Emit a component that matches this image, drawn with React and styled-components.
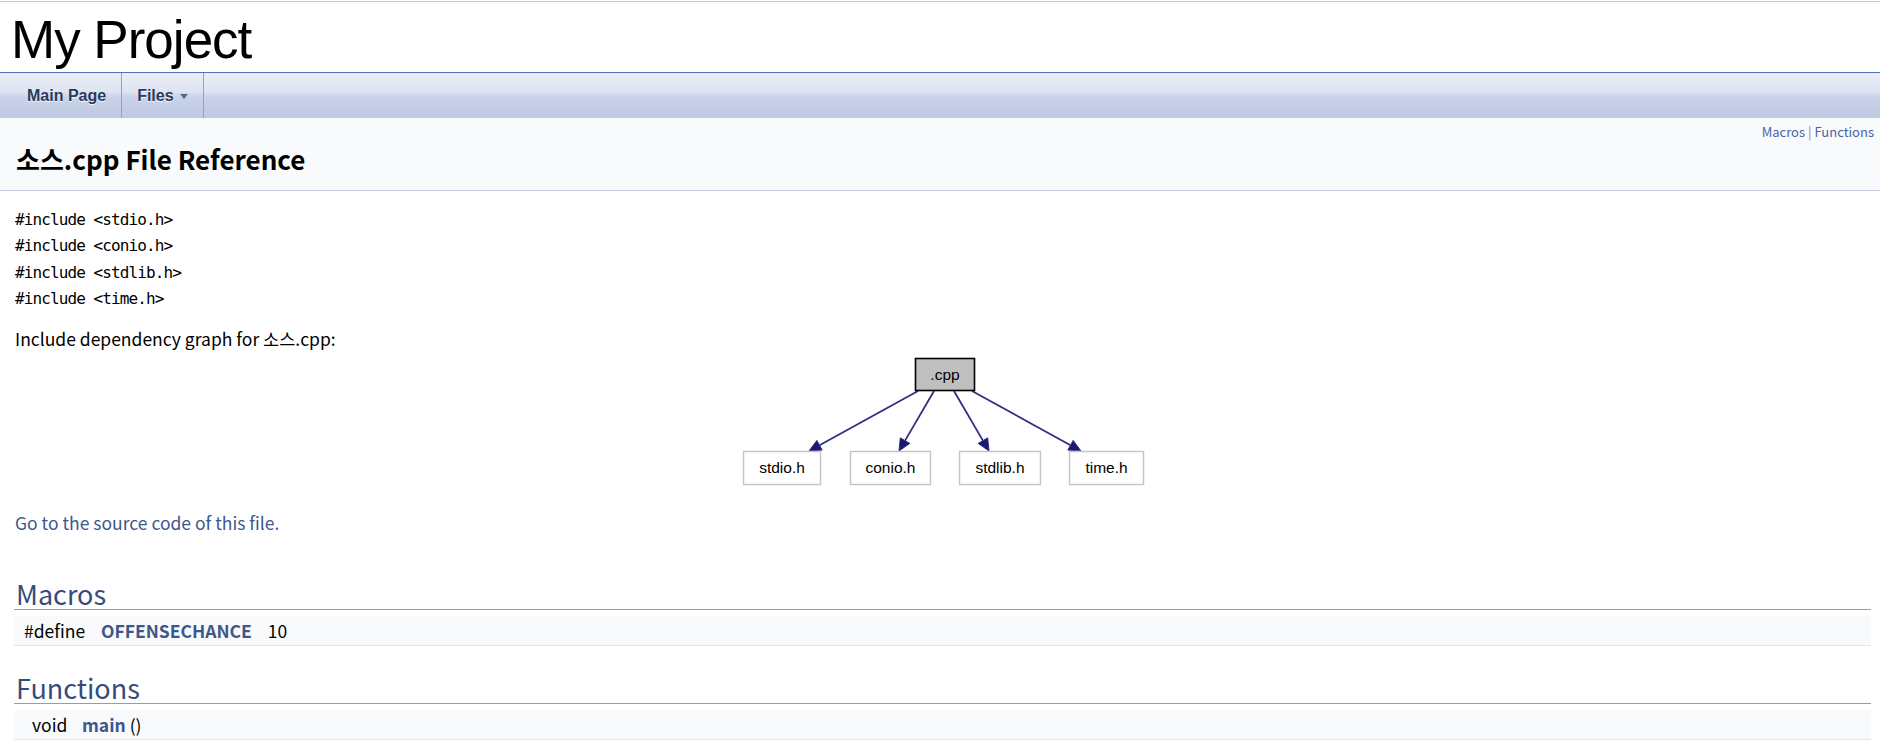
import React from "react";
import styled, { createGlobalStyle } from "styled-components";

const Global = createGlobalStyle`
  html, body { margin: 0; padding: 0; background: #ffffff; }
  body {
    font-family: "Noto Sans CJK KR", "Noto Sans", sans-serif;
    color: #000000;
  }
`;

const Page = styled.div`
  padding-top: 1px;
`;

const TitleArea = styled.div`
  border-top: 1px solid #c8c8c8;
  border-bottom: 1px solid #5373b4;
  height: 70px;
  box-sizing: content-box;
`;

const ProjectName = styled.div`
  font-family: "Liberation Sans", Arial, sans-serif;
  font-size: 53px;
  letter-spacing: -1px;
  line-height: 64px;
  padding: 6px 0 0 11px;
  color: #000;
`;

const NavBar = styled.nav`
  height: 45px;
  display: flex;
  padding-left: 12px;
  background: linear-gradient(
    to bottom,
    #e9edf6 0%,
    #dfe5f1 40%,
    #c8d2e8 55%,
    #bfcae3 100%
  );
`;

const Tab = styled.a`
  display: flex;
  align-items: center;
  gap: 6px;
  padding: 0 15px;
  border-right: 1px solid #8da2cd;
  font-family: "Liberation Sans", Arial, sans-serif;
  font-weight: bold;
  font-size: 16px;
  color: #283a5d;
  text-shadow: 0 1px 1px rgba(255, 255, 255, 0.9);
  text-decoration: none;
`;

const Caret = styled.span`
  width: 0;
  height: 0;
  border-style: solid;
  border-width: 5px 4.5px 0 4.5px;
  border-color: #5a6a8b transparent transparent transparent;
  margin-top: 1px;
`;

const Header = styled.div`
  background: #f9fafc;
  border-bottom: 1px solid #c4cfe5;
  padding: 5px 6px 14px 16px;
`;

const Summary = styled.div`
  text-align: right;
  font-size: 13px;
  line-height: 18px;
  color: #888;
`;

const SummaryLink = styled.a`
  color: #4665a2;
  text-decoration: none;
`;

const PageTitle = styled.div`
  font-weight: bold;
  font-size: 26px;
  line-height: 35px;
  color: #000;
`;

const Contents = styled.div`
  margin: 0 9px 0 14px;
  padding-top: 16px;
`;

const Includes = styled.div`
  font-family: "DejaVu Sans Mono", "Liberation Mono", monospace;
  font-size: 16px;
  letter-spacing: -0.9px;
  line-height: 26.3px;
  padding-left: 1px;
`;

const Para = styled.p`
  margin: ${(p) => p.$mt || 0}px 0 0 1px;
  font-size: 17.5px;
  line-height: 26px;
`;

const Link = styled.a`
  color: #3d578c;
  text-decoration: none;
  font-weight: ${(p) => (p.$bold ? "bold" : "normal")};
`;

const GraphWrap = styled.div`
  display: flex;
  justify-content: center;
`;

const GroupHeader = styled.h2`
  margin: ${(p) => p.$mt}px 0 0 0;
  padding-left: 2px;
  font-size: 27px;
  font-weight: normal;
  line-height: 31px;
  color: #354c7b;
  border-bottom: 1px solid #879ecb;
`;

const MemberRow = styled.div`
  margin-top: 6px;
  height: 29px;
  display: flex;
  align-items: center;
  background: #f9fafc;
  border-bottom: 1px solid #dee4f0;
  font-size: 17.5px;
  line-height: 29px;
`;

const MemLeft = styled.span`
  width: ${(p) => p.$w}px;
  padding-left: ${(p) => p.$pl}px;
  box-sizing: border-box;
  white-space: nowrap;
`;

const MemRight = styled.span`
  white-space: nowrap;
`;

const MacroValue = styled.span`
  margin-left: 16px;
`;

const nodes = [
  { label: ".cpp", x: 182, y: 6, w: 59, h: 32, main: true },
  { label: "stdio.h", x: 10, y: 99, w: 77, h: 33 },
  { label: "conio.h", x: 117, y: 99, w: 80, h: 33 },
  { label: "stdlib.h", x: 226, y: 99, w: 81, h: 33 },
  { label: "time.h", x: 336, y: 99, w: 74, h: 33 },
];

const edges = [
  { s: [185, 39], t: [76, 99] },
  { s: [201, 39], t: [166, 99] },
  { s: [221, 39], t: [256, 99] },
  { s: [239, 39], t: [348, 99] },
];

function Edge({ s, t }) {
  const dx = t[0] - s[0];
  const dy = t[1] - s[1];
  const len = Math.hypot(dx, dy);
  const ux = dx / len;
  const uy = dy / len;
  const L = 12;
  const W = 5.5;
  const bx = t[0] - ux * L;
  const by = t[1] - uy * L;
  const nx = -uy;
  const ny = ux;
  const pts = `${t[0]},${t[1]} ${bx + nx * W},${by + ny * W} ${bx - nx * W},${by - ny * W}`;
  return (
    <g>
      <line x1={s[0]} y1={s[1]} x2={bx} y2={by} stroke="#2e2e85" strokeWidth="1.8" />
      <polygon points={pts} fill="#191970" stroke="#2e2e85" strokeWidth="1" />
    </g>
  );
}

function DependencyGraph() {
  return (
    <svg width="420" height="140" viewBox="0 0 420 140">
      {edges.map((e, i) => (
        <Edge key={i} s={e.s} t={e.t} />
      ))}
      {nodes.map((n) => (
        <g key={n.label}>
          <rect
            x={n.x + 0.5}
            y={n.y + 0.5}
            width={n.w}
            height={n.h}
            fill={n.main ? "#bfbfbf" : "#ffffff"}
            stroke={n.main ? "#000000" : "#c4c4c4"}
            strokeWidth={n.main ? 1.6 : 1.4}
          />
          <text
            x={n.x + n.w / 2 + 0.5}
            y={n.y + n.h / 2 + 5.5}
            textAnchor="middle"
            fontFamily="Liberation Sans, Arial, sans-serif"
            fontSize="15.5"
            fill="#000"
          >
            {n.label}
          </text>
        </g>
      ))}
    </svg>
  );
}

export default function App() {
  return (
    <Page>
      <Global />
      <TitleArea>
        <ProjectName>My Project</ProjectName>
      </TitleArea>
      <NavBar>
        <Tab href="#">Main Page</Tab>
        <Tab href="#">
          Files <Caret />
        </Tab>
      </NavBar>
      <Header>
        <Summary>
          <SummaryLink href="#">Macros</SummaryLink> |{" "}
          <SummaryLink href="#">Functions</SummaryLink>
        </Summary>
        <PageTitle>소스.cpp File Reference</PageTitle>
      </Header>
      <Contents>
        <Includes>
          <div>#include &lt;stdio.h&gt;</div>
          <div>#include &lt;conio.h&gt;</div>
          <div>#include &lt;stdlib.h&gt;</div>
          <div>#include &lt;time.h&gt;</div>
        </Includes>
        <Para $mt={14}>Include dependency graph for 소스.cpp:</Para>
        <GraphWrap>
          <DependencyGraph />
        </GraphWrap>
        <Para $mt={18}>
          <Link href="#">Go to the source code of this file.</Link>
        </Para>
        <GroupHeader $mt={42}>Macros</GroupHeader>
        <MemberRow>
          <MemLeft $w={87} $pl={10}>#define</MemLeft>
          <MemRight>
            <Link href="#" $bold>
              OFFENSECHANCE
            </Link>
            <MacroValue>10</MacroValue>
          </MemRight>
        </MemberRow>
        <GroupHeader $mt={26}>Functions</GroupHeader>
        <MemberRow>
          <MemLeft $w={68} $pl={18}>void</MemLeft>
          <MemRight>
            <Link href="#" $bold>
              main
            </Link>{" "}
            ()
          </MemRight>
        </MemberRow>
      </Contents>
    </Page>
  );
}
